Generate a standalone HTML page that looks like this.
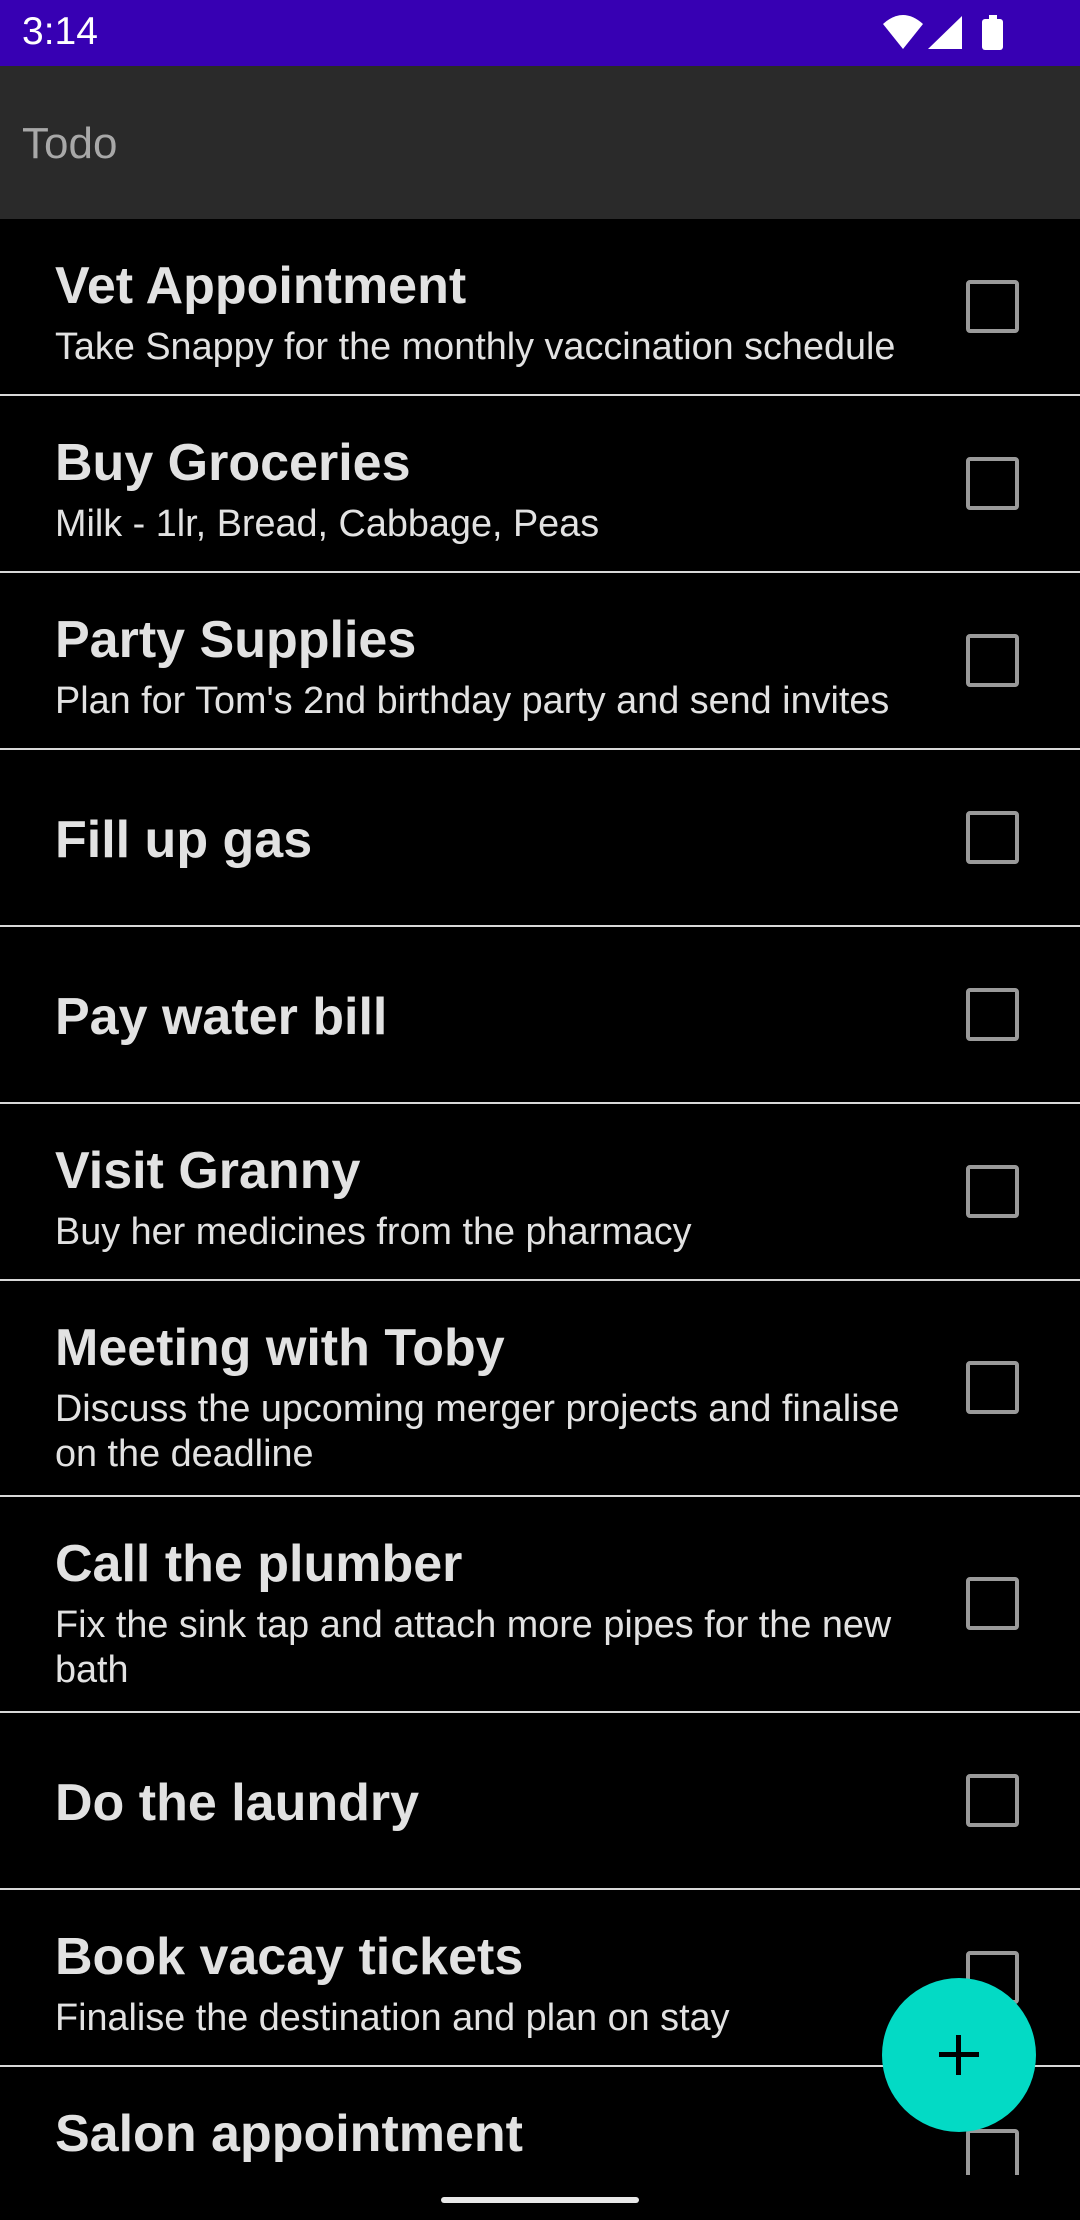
<!DOCTYPE html>
<html><head><meta charset="utf-8"><style>
*{margin:0;padding:0;box-sizing:border-box}
body{width:1080px;height:2220px;background:#000;overflow:hidden;position:relative;font-family:"Liberation Sans",Roboto,sans-serif}
.sb{position:absolute;top:0;left:0;width:1080px;height:66px;background:#3700b3}
.time{position:absolute;left:22px;top:10px;font-size:39px;color:#fff}
.tb{position:absolute;top:66px;left:0;width:1080px;height:153px;background:#2a2a2a}
.tb span{position:absolute;left:22px;top:53px;font-size:44px;color:#a8a8a8}
.list{position:absolute;top:219px;left:0;width:1080px;height:1956px;overflow:hidden}
.row{position:relative;width:1080px;border-bottom:2px solid #d8d8d8;padding-left:55px}
.t{font-size:52px;font-weight:bold;color:#e2e2e2;line-height:62px;white-space:nowrap}
.s{font-size:37.8px;color:#e2e2e2;line-height:45px;margin-top:8px;white-space:nowrap}
.two{padding-top:36px}
.one{display:flex;align-items:center;padding-top:4px}
.cb{position:absolute;left:966px;top:50%;margin-top:-27px;width:53px;height:53px;border:4px solid #9a9a9a;border-radius:4px}
.fab{position:absolute;left:882px;top:1978px;width:154px;height:154px;border-radius:50%;background:#03dac5}
.fab:before{content:"";position:absolute;left:57px;top:74px;width:40px;height:5px;background:#000}
.fab:after{content:"";position:absolute;left:74px;top:57px;width:5px;height:40px;background:#000}
.nav{position:absolute;left:441px;top:2197px;width:198px;height:6px;border-radius:3px;background:#e8e8e8}
</style></head><body>
<div class="sb"><div class="time">3:14</div>
<svg style="position:absolute;left:0;top:0" width="1080" height="66">
<path d="M883 24 Q903 6 923 24 L903 49 Z" fill="#fff"/>
<path d="M928 49 L962 16 L962 49 Z" fill="#fff"/>
<rect x="989" y="15" width="8" height="5" fill="#fff"/>
<rect x="982" y="19" width="21" height="31" rx="3" fill="#fff"/>
</svg></div>
<div class="tb"><span>Todo</span></div>
<div class="list">
<div class="row two" style="height:177px"><div class="t">Vet Appointment</div><div class="s">Take Snappy for the monthly vaccination schedule</div><div class="cb"></div></div>
<div class="row two" style="height:177px"><div class="t">Buy Groceries</div><div class="s">Milk - 1lr, Bread, Cabbage, Peas</div><div class="cb"></div></div>
<div class="row two" style="height:177px"><div class="t">Party Supplies</div><div class="s">Plan for Tom's 2nd birthday party and send invites</div><div class="cb"></div></div>
<div class="row one" style="height:177px"><div class="t">Fill up gas</div><div class="cb"></div></div>
<div class="row one" style="height:177px"><div class="t">Pay water bill</div><div class="cb"></div></div>
<div class="row two" style="height:177px"><div class="t">Visit Granny</div><div class="s">Buy her medicines from the pharmacy</div><div class="cb"></div></div>
<div class="row two" style="height:216px"><div class="t">Meeting with Toby</div><div class="s">Discuss the upcoming merger projects and finalise<br>on the deadline</div><div class="cb"></div></div>
<div class="row two" style="height:216px"><div class="t">Call the plumber</div><div class="s">Fix the sink tap and attach more pipes for the new<br>bath</div><div class="cb"></div></div>
<div class="row one" style="height:177px"><div class="t">Do the laundry</div><div class="cb"></div></div>
<div class="row two" style="height:177px"><div class="t">Book vacay tickets</div><div class="s">Finalise the destination and plan on stay</div><div class="cb"></div></div>
<div class="row two" style="height:177px;border-bottom:none"><div class="t">Salon appointment</div><div class="s">Get a haircut and a manicure before the party</div><div class="cb"></div></div>
</div>
<div class="fab"></div>
<div class="nav"></div>
</body></html>
